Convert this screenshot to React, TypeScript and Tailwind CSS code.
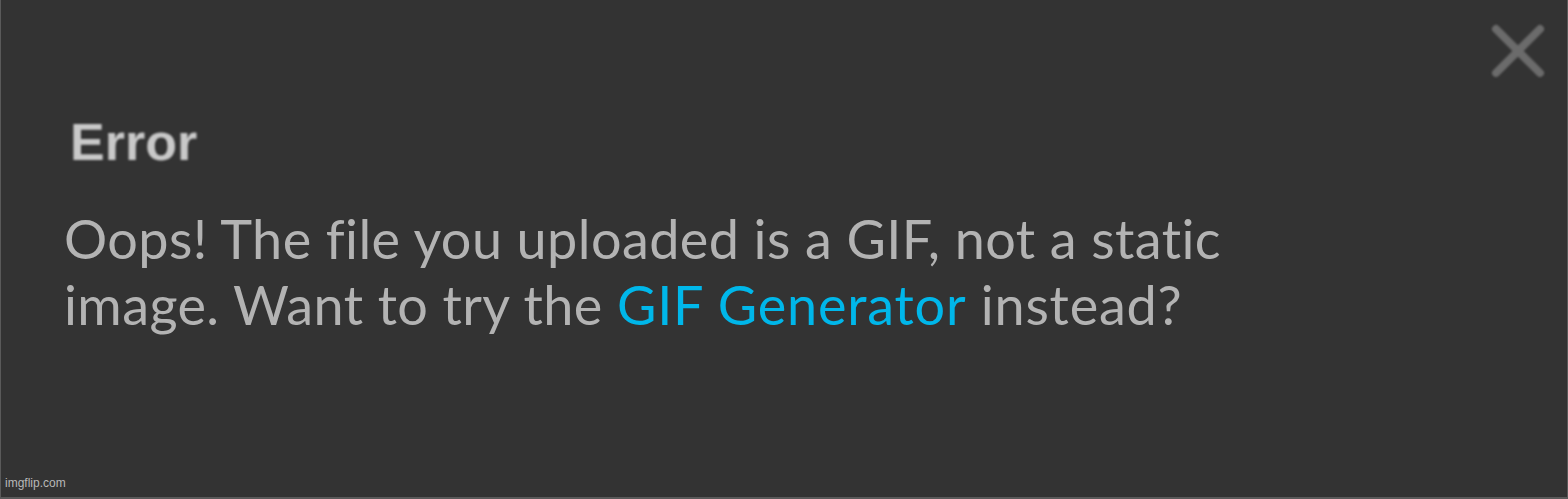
export default function App() {
  return (
    <div className="relative h-[499px] w-[1568px] overflow-hidden bg-[#333333] border-l border-r border-b-2 border-[#5a5a5a]">
      {/* close button */}
      <button className="absolute right-[22px] top-[24px] h-[54px] w-[54px] blur-[1.2px]">
        <svg viewBox="0 0 54 54" className="h-full w-full">
          <path
            d="M5 5 L49 49 M49 5 L5 49"
            stroke="#6b6b6b"
            strokeWidth="8"
            strokeLinecap="round"
          />
        </svg>
      </button>

      <div className="flex flex-col pl-[63px] pt-[108px]">
        <h2 className="ml-[6px] font-['Liberation_Sans',Arial,sans-serif] text-[52px] font-bold leading-[68px] text-[#c9c9c9] blur-[1.3px]">
          Error
        </h2>
        <p className="mt-[30px] font-['Lato','Noto_Sans',sans-serif] text-[54px] leading-[66px] tracking-[0.4px] text-[#b3b3b3]">
          Oops! The file you uploaded is a GIF, not a{" "}
          <span className="[font-variant-ligatures:no-common-ligatures]">static</span>
          <br />
          image. Want to try the{" "}
          <a className="text-[#00b7ea] tracking-[0.8px]">GIF Generator</a>{" "}
          <span className="tracking-[0.8px]">instead?</span>
        </p>
      </div>

      <span className="absolute bottom-[5px] left-[4px] font-['Liberation_Sans',Arial,sans-serif] text-[12px] text-[#b8b8b8]">
        imgflip.com
      </span>
    </div>
  );
}
